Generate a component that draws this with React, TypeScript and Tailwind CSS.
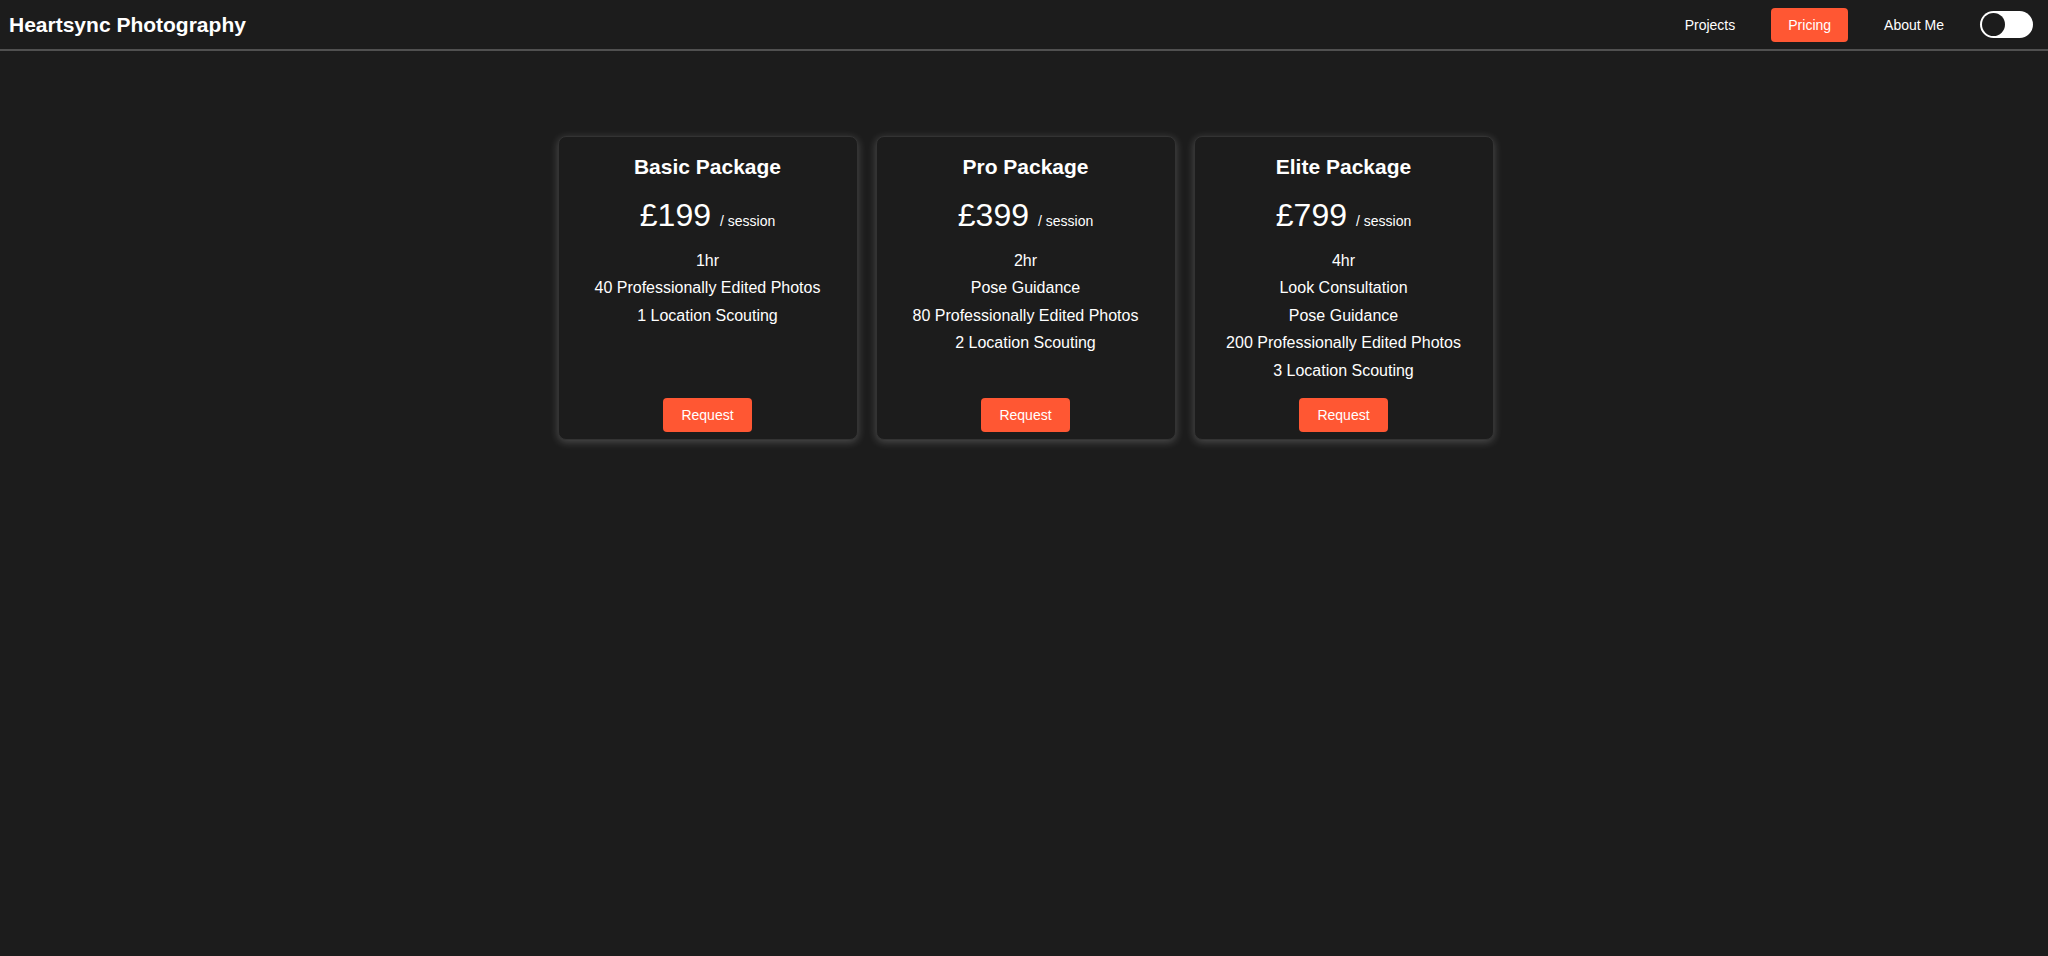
import { useState } from "react";

type Plan = {
  name: string;
  price: string;
  features: string[];
};

const plans: Plan[] = [
  {
    name: "Basic Package",
    price: "£199",
    features: ["1hr", "40 Professionally Edited Photos", "1 Location Scouting"],
  },
  {
    name: "Pro Package",
    price: "£399",
    features: ["2hr", "Pose Guidance", "80 Professionally Edited Photos", "2 Location Scouting"],
  },
  {
    name: "Elite Package",
    price: "£799",
    features: [
      "4hr",
      "Look Consultation",
      "Pose Guidance",
      "200 Professionally Edited Photos",
      "3 Location Scouting",
    ],
  },
];

const Header = () => {
  const [dark, setDark] = useState(true);
  return (
    <header className="h-[51px] flex items-center justify-between pl-[9px] pr-[15px] border-b-2 border-[#505050] bg-[#1c1c1c]">
      <h1 className="text-[21px] font-bold text-white leading-none">Heartsync Photography</h1>
      <nav className="flex items-center gap-5 text-[14px] text-white">
        <a className="px-4 leading-[34px] cursor-pointer">Projects</a>
        <a className="px-[17px] h-[34px] leading-[34px] rounded bg-[#ff5733] cursor-pointer">Pricing</a>
        <a className="px-4 leading-[34px] cursor-pointer">About Me</a>
        <button
          onClick={() => setDark(!dark)}
          className="w-[53px] h-[27px] rounded-full bg-white flex items-center px-[2px]"
        >
          <span className={`w-[23px] h-[23px] rounded-full bg-[#1c1c1c] ${dark ? "" : "ml-auto"}`} />
        </button>
      </nav>
    </header>
  );
};

const PlanCard = ({ plan }: { plan: Plan }) => (
  <div className="w-[300px] flex flex-col items-center text-center text-white bg-[#1c1c1c] rounded-lg border border-[#333] shadow-[0_2px_8px_rgba(255,255,255,0.22)] pt-[18px] pb-[7px] px-4">
    <h3 className="text-[21px] font-bold leading-[24px]">{plan.name}</h3>
    <div className="mt-[18px] flex items-baseline gap-[9px]">
      <span className="text-[32px] leading-[37px]">{plan.price}</span>
      <span className="text-[14px]">/ session</span>
    </div>
    <ul className="mt-[13px] mb-[14px] text-[16px] leading-[27.4px]">
      {plan.features.map((f) => (
        <li key={f}>{f}</li>
      ))}
    </ul>
    <button className="mt-auto h-[34px] px-[18px] rounded bg-[#ff5733] text-white text-[14px]">
      Request
    </button>
  </div>
);

export default function App() {
  return (
    <div className="min-h-screen bg-[#1c1c1c] font-['Liberation_Sans',Arial,sans-serif]">
      <Header />
      <main className="flex justify-center gap-[18px] pt-[85px] pl-[3px]">
        {plans.map((p) => (
          <div key={p.name} className="flex">
            <PlanCard plan={p} />
          </div>
        ))}
      </main>
    </div>
  );
}
